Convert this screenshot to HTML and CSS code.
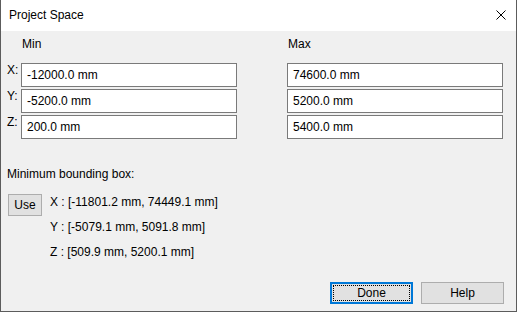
FILE: index.html
```html
<!DOCTYPE html>
<html lang="en">

<head>
    <meta charset="UTF-8">
    <title>Project Space</title>
    <link rel="stylesheet" href="styles.css">
</head>

<body>
    <div class="window">
        <div class="titlebar">
            <span class="title">Project Space</span>
            <svg class="close" width="10" height="10" viewBox="0 0 10 10">
                <path d="M0.5 0.5 L9.5 9.5 M9.5 0.5 L0.5 9.5" stroke="#000" stroke-width="1" fill="none" />
            </svg>
        </div>

        <div class="content">
            <div class="ranges">
                <span></span>
                <span class="head">Min</span>
                <span></span>
                <span class="head">Max</span>

                <span class="axis">X:</span>
                <div class="field">-12000.0 mm</div>
                <span></span>
                <div class="field">74600.0 mm</div>

                <span class="axis">Y:</span>
                <div class="field">-5200.0 mm</div>
                <span></span>
                <div class="field">5200.0 mm</div>

                <span class="axis">Z:</span>
                <div class="field">200.0 mm</div>
                <span></span>
                <div class="field">5400.0 mm</div>
            </div>

            <p class="bbox-title">Minimum bounding box:</p>
            <div class="bbox">
                <button class="btn use">Use</button>
                <div class="bbox-lines">
                    <p>X : [-11801.2 mm, 74449.1 mm]</p>
                    <p>Y : [-5079.1 mm, 5091.8 mm]</p>
                    <p>Z : [509.9 mm, 5200.1 mm]</p>
                </div>
            </div>

            <div class="footer">
                <button class="btn wide default">Done</button>
                <button class="btn wide">Help</button>
            </div>
        </div>
    </div>
</body>

</html>
```

FILE: styles.css
```css
* {
    padding: 0;
    margin: 0;
    box-sizing: border-box;
}

body {
    font-family: "Liberation Sans", Arial, sans-serif;
    font-size: 12px;
    line-height: 15px;
    color: #000;
    background: #fff;
}

.window {
    width: 517px;
    height: 312px;
    border: 1px solid #5c5c5c;
    border-top: none;
    background-color: #f0f0f0;
    display: flex;
    flex-direction: column;
}

.titlebar {
    height: 31px;
    background-color: #fff;
    display: flex;
    align-items: center;
    justify-content: space-between;
    padding-left: 8px;
    padding-right: 10px;
}

.title {
    margin-top: -1px;
}

.close {
    display: block;
    margin-top: -1px;
}

.content {
    flex: 1;
    display: flex;
    flex-direction: column;
    padding: 6px 12px 7px 6px;
}

.ranges {
    display: grid;
    grid-template-columns: 14px 216px 50px 216px;
    grid-template-rows: 24px 24px 24px 24px;
    row-gap: 2px;
}

.head {
    padding-left: 1px;
}

.axis {
    line-height: 15px;
}

.field {
    height: 24px;
    border: 1px solid #7a7a7a;
    background-color: #fff;
    padding-left: 5px;
    line-height: 22px;
}

.bbox-title {
    margin-top: 28px;
}

.bbox {
    display: flex;
    gap: 8px;
    margin-top: 12px;
    padding-left: 1px;
}

.bbox-lines p {
    height: 25px;
    line-height: 15px;
    padding-top: 1px;
}

.btn {
    font-family: inherit;
    font-size: 12px;
    color: #000;
    background-color: #e1e1e1;
    border: 1px solid #adadad;
    height: 22px;
}

.use {
    width: 34px;
}

.footer {
    margin-top: auto;
    display: flex;
    justify-content: flex-end;
    gap: 8px;
}

.wide {
    width: 83px;
}

.default {
    position: relative;
    border: 2px solid #0078d7;
}

/* focus rectangle */
.default::after {
    content: '';
    position: absolute;
    top: 1px;
    left: 1px;
    right: 1px;
    bottom: 1px;
    border: 1px dotted #000;
}
```
